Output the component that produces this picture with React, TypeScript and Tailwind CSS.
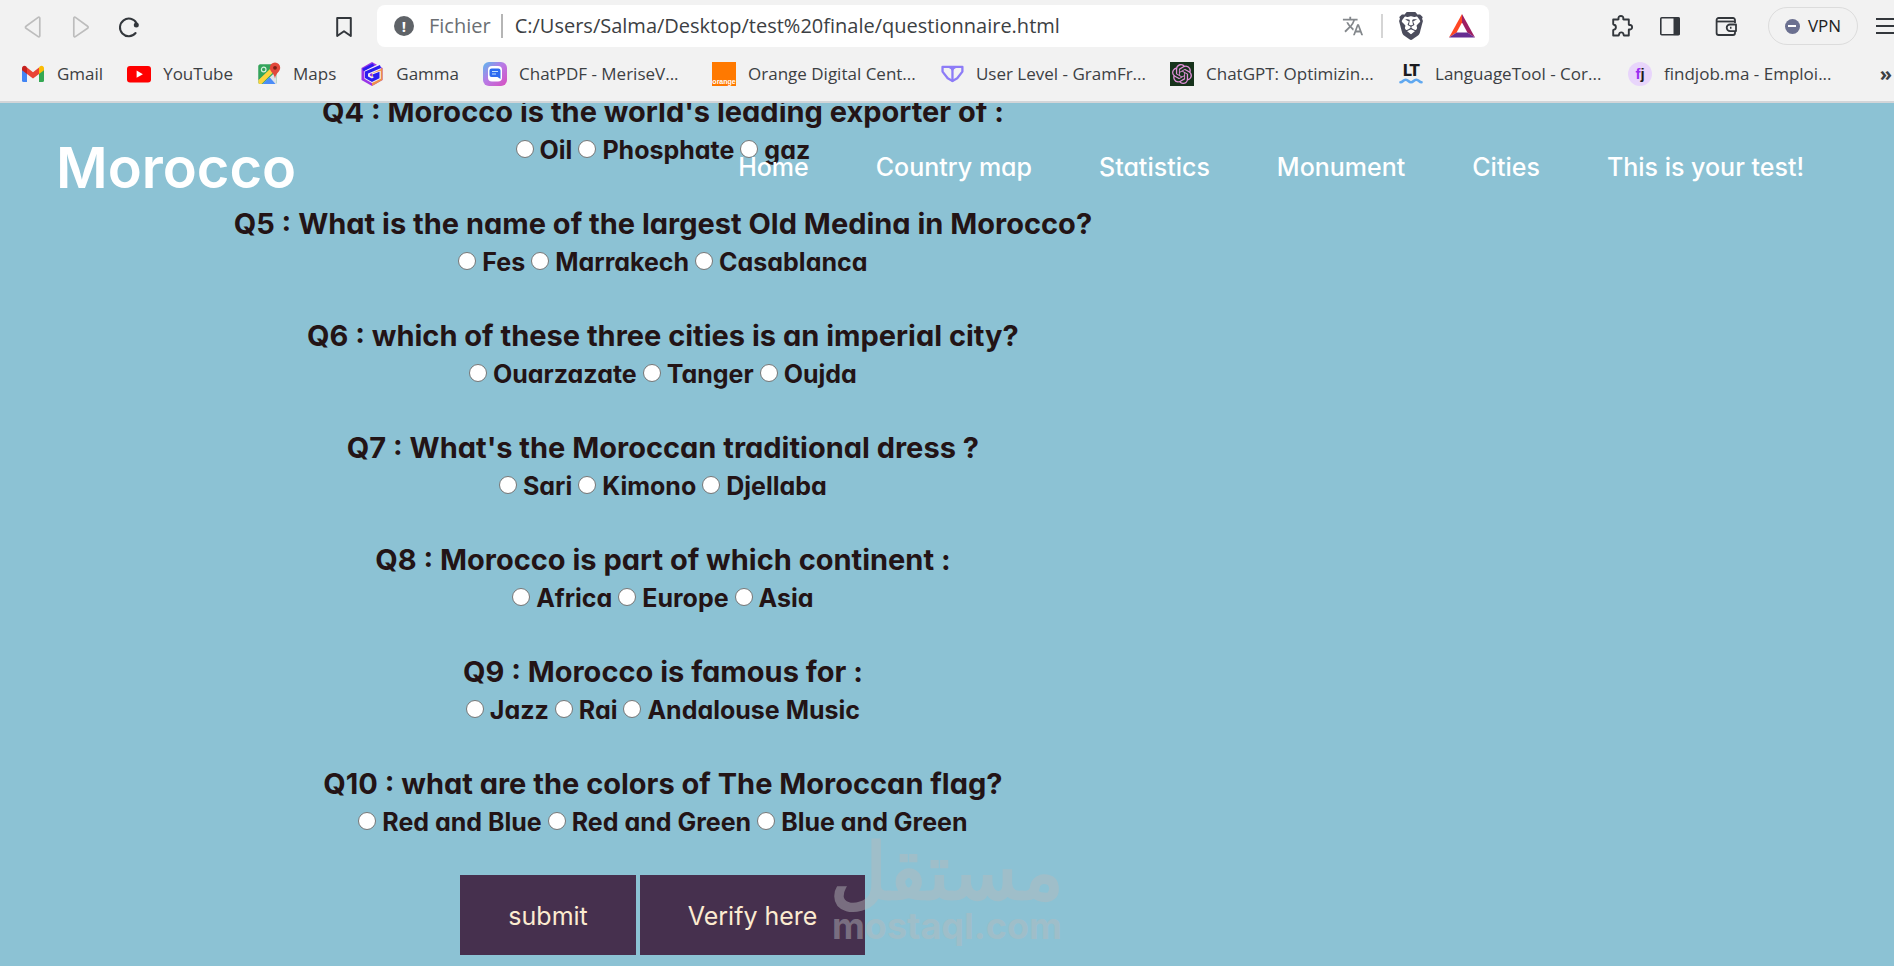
import type { ReactNode } from "react";
import { MdTranslate } from "react-icons/md";
import { SiBrave, SiOpenai } from "react-icons/si";

const iconButton = "flex size-6 shrink-0 items-center justify-center text-[#33373c]";

function BackIcon() {
  return (
    <svg viewBox="0 0 24 24" className="size-6" fill="none" stroke="#bdbdbd" strokeWidth="1.7" strokeLinejoin="round">
      <path d="M17.2 3.4 5 12.2a1.2 1.2 0 0 0 0 2L17.2 22.6a1 1 0 0 0 1.6-.8V4.2a1 1 0 0 0-1.6-.8Z" />
    </svg>
  );
}

function ForwardIcon() {
  return (
    <svg viewBox="0 0 24 24" className="size-6" fill="none" stroke="#bdbdbd" strokeWidth="1.7" strokeLinejoin="round">
      <path d="M6.4 3.4 18.6 12.2a1.2 1.2 0 0 1 0 2L6.4 22.6a1 1 0 0 1-1.6-.8V4.2a1 1 0 0 1 1.6-.8Z" />
    </svg>
  );
}

function ReloadIcon() {
  return (
    <svg viewBox="0 0 24 24" className="size-6" fill="none" stroke="currentColor" strokeWidth="2" strokeLinecap="round">
      <path d="M19.5 9.2A8.8 8.8 0 1 0 18.6 19" />
      <circle cx="19.3" cy="11" r="2.5" fill="currentColor" stroke="none" />
    </svg>
  );
}

function BookmarkIcon() {
  return (
    <svg viewBox="0 0 24 24" className="size-6" fill="none" stroke="currentColor" strokeWidth="2" strokeLinejoin="round">
      <path d="M5.2 4h13.6v18L12 17.2 5.2 22Z" />
    </svg>
  );
}

function BatIcon() {
  return (
    <svg viewBox="0 0 26 24" className="h-6 w-[26px]">
      <path d="M13 0v8.6L7.6 18.6 0 23.4Z" fill="#ff4724" />
      <path d="M13 0l13 23.4-7.6-4.8L13 8.6Z" fill="#9e1f63" />
      <path d="M0 23.4l7.6-4.8h10.8l7.6 4.8Z" fill="#662d91" />
    </svg>
  );
}

function PuzzleIcon() {
  return (
    <svg viewBox="0 0 24 24" className="size-6" fill="none" stroke="currentColor" strokeWidth="1.9" strokeLinejoin="round">
      <path d="M3.200 5.500h4.800c.5 0 .6-.4.5-.9C8.200 2.900 9.400 2 10.900 2s2.700.9 2.400 2.600c-.1.500 0 .9.500.9h5v5c0 .5.400.6.900.5 1.500-.3 2.400.8 2.400 2.200s-.9 2.500-2.400 2.200c-.5-.1-.9 0-.9.500v5.600h-4.500c-.4 0-.6-.3-.7-.8-.2-1.500-1-2.300-2.300-2.300s-2.100.8-2.300 2.300c-.1.500-.3.800-.7.800H3.200v-5.200c0-.5.300-.6.700-.7 1.300-.2 2-1.100 2-2.400s-.7-2.200-2-2.400c-.4-.1-.7-.3-.7-.8Z" />
    </svg>
  );
}

function SidebarIcon() {
  return (
    <svg viewBox="0 0 24 24" className="size-6" fill="none" stroke="currentColor" strokeWidth="1.6">
      <rect x="2.8" y="3.800" width="18.400" height="17" rx="1" />
      <path d="M15.500 3.500h6v17.600h-6Z" fill="currentColor" stroke="none" />
    </svg>
  );
}

function WalletIcon() {
  return (
    <svg viewBox="0 0 24 24" className="size-6" fill="none" stroke="currentColor" strokeWidth="1.8" strokeLinejoin="round">
      <path d="M21 9V6a2 2 0 0 0-2-2H4.600A2 2 0 0 0 2.600 6v13a2 2 0 0 0 2 2H19a2 2 0 0 0 2-2V17.500" />
      <path d="M3 7.500h18" />
      <path d="M22 10.500h-6a3.300 3.300 0 0 0 0 6.600h6Z" />
      <path d="M16 13.800h1.500" strokeWidth="2" />
    </svg>
  );
}

function GmailIcon() {
  return (
    <svg viewBox="0 0 24 24" className="size-6">
      <path d="M1 7v11.500A1.500 1.500 0 0 0 2.500 20H6V9Z" fill="#4285f4" />
      <path d="M18 9v11h3.500a1.500 1.500 0 0 0 1.500-1.500V7Z" fill="#34a853" />
      <path d="M18 5.600V12l5-3.800V6.300c0-2.300-2.400-3.200-4-2Z" fill="#fbbc04" />
      <path d="M6 12V5.600l6 4.600 6-4.600V12l-6 4.600Z" fill="#ea4335" />
      <path d="M1 6.300v1.900L6 12V5.600L5 4.300c-1.600-1.200-4-.3-4 2Z" fill="#c5221f" />
    </svg>
  );
}

function YouTubeIcon() {
  return (
    <svg viewBox="0 0 24 24" className="size-6">
      <rect y="4" width="24" height="16.500" rx="3" fill="#f00" />
      <path d="m9.600 8.600 6.300 3.600-6.300 3.600Z" fill="#fff" />
    </svg>
  );
}

function MapsIcon() {
  return (
    <svg viewBox="0 0 24 24" className="size-6">
      <rect x="1.500" y="2.500" width="18" height="19.500" rx="1.500" fill="#34a45b" />
      <path d="m19.500 9-14 13h14Z" fill="#dfe3e8" />
      <path d="M5.500 22 12.500 15l6 7Z" fill="#4b8df8" />
      <path d="M1.500 20.500v-3L14 5.500l4 3L4.500 22H3a1.500 1.500 0 0 1-1.500-1.500Z" fill="#fdd33c" />
      <path d="M1.500 4A1.500 1.500 0 0 1 3 2.500h12L14 6 1.500 18Z" fill="#34a45b" />
      <circle cx="6.700" cy="7.500" r="2.300" fill="none" stroke="#d5efdd" strokeWidth="1.200" />
      <path d="M18 .5a5.200 5.200 0 0 0-5.200 5.300c0 4 4.200 5 5.200 10.700 1-5.700 5.200-6.700 5.200-10.700A5.200 5.200 0 0 0 18 .5Z" fill="#e2483b" />
      <circle cx="18" cy="5.800" r="1.900" fill="#7c1f16" />
    </svg>
  );
}

function GammaIcon() {
  return (
    <svg viewBox="0 0 24 24" className="size-6">
      <path d="m12 0 10.500 6v12L12 24 1.500 18V6Z" fill="#9a35e8" />
      <path d="m12 9 10.500-3v12L12 24Z" fill="#f0904a" />
      <path d="M20 4.500 7.200 10.200v5L12 18l6-3v-2.500l-5 1.500" fill="none" stroke="#f3f3f3" strokeWidth="5.500" />
      <path d="M20.500 4.500 6.500 10.500v4.700l5.500 3 6-3V12l-5 2M3 8l10.500-5.500" fill="none" stroke="#2b1df0" strokeWidth="3" />
    </svg>
  );
}

function ChatPdfIcon() {
  return (
    <svg viewBox="0 0 24 24" className="size-6">
      <defs>
        <linearGradient id="pdf-tile" x1="0" y1="0" x2="1" y2="1">
          <stop offset="0" stopColor="#59b8ee" />
          <stop offset=".45" stopColor="#b77be6" />
          <stop offset="1" stopColor="#d84fc0" />
        </linearGradient>
      </defs>
      <rect width="24" height="24" rx="6" fill="url(#pdf-tile)" />
      <rect x="5" y="4" width="14" height="15.500" rx="4" fill="#fff" />
      <path d="M8.500 6.500h7a2 2 0 0 1 2 2v8.500l-3-2h-6a2 2 0 0 1-2-2V8.500a2 2 0 0 1 2-2Z" fill="#2e6bf0" />
      <path d="M9 9.500h6M9 12h4" stroke="#bfe0ff" strokeWidth="1.200" />
    </svg>
  );
}

function OrangeIcon() {
  return (
    <span className="flex size-6 items-end justify-center bg-[#ff7900] font-['Liberation_Sans'] text-[7px] leading-[9px] font-bold text-white">
      orange
    </span>
  );
}

function GramIcon() {
  return (
    <svg viewBox="0 0 24 24" className="size-6" fill="none" stroke="#8d7cf7" strokeWidth="2.400" strokeLinejoin="round" strokeLinecap="round">
      <path d="M1.600 4.500h20.800V9.500L17 16.500 12 19.300 7 16.500 1.600 9.500Z" />
      <path d="M9.500 5c1.800.6 2.500 1.700 2.500 3.500v10.500M14.500 5C12.700 5.600 12 6.700 12 8.500" />
    </svg>
  );
}

function LanguageToolIcon() {
  return (
    <span className="flex size-6 flex-col items-center justify-center">
      <span className="font-['DejaVu_Sans'] text-[15px] leading-[14px] font-bold text-[#1b1b20]">LT</span>
      <svg viewBox="0 0 24 6" className="h-[6px] w-6" fill="none" stroke="#5fa8f0" strokeWidth="2.600" strokeLinecap="round">
        <path d="M1.500 4.300c2.500 0 2.500-2.600 5.200-2.600s2.700 2.600 5.300 2.600 2.600-2.600 5.300-2.600 2.700 2.600 5.200 2.600" />
      </svg>
    </span>
  );
}

function FindJobIcon() {
  return (
    <span className="flex size-6 items-center justify-center rounded-full bg-[#e8d5fb] font-['Liberation_Sans'] text-[15px] leading-5 font-bold text-[#1b1b20]">
      <span className="text-[#9b2ff0]">f</span>j
    </span>
  );
}

const bookmarks: { label: string; icon: ReactNode }[] = [
  { label: "Gmail", icon: <GmailIcon /> },
  { label: "YouTube", icon: <YouTubeIcon /> },
  { label: "Maps", icon: <MapsIcon /> },
  { label: "Gamma", icon: <GammaIcon /> },
  { label: "ChatPDF - MeriseV...", icon: <ChatPdfIcon /> },
  { label: "Orange Digital Cent...", icon: <OrangeIcon /> },
  { label: "User Level - GramFr...", icon: <GramIcon /> },
  {
    label: "ChatGPT: Optimizin...",
    icon: (
      <span className="flex size-6 items-center justify-center bg-[#17331c]">
        <SiOpenai className="size-5 text-[#e08fd8]" />
      </span>
    ),
  },
  { label: "LanguageTool - Cor...", icon: <LanguageToolIcon /> },
  { label: "findjob.ma - Emploi...", icon: <FindJobIcon /> },
];

const navLinks = ["Home", "Country map", "Statistics", "Monument", "Cities", "This is your test!"];

const questions = [
  { id: "q4", title: "Q4 : Morocco is the world's leading exporter of :", options: ["Oil", "Phosphate", "gaz"] },
  { id: "q5", title: "Q5 : What is the name of the largest Old Medina in Morocco?", options: ["Fes", "Marrakech", "Casablanca"] },
  { id: "q6", title: "Q6 : which of these three cities is an imperial city?", options: ["Ouarzazate", "Tanger", "Oujda"] },
  { id: "q7", title: "Q7 : What's the Moroccan traditional dress ?", options: ["Sari", "Kimono", "Djellaba"] },
  { id: "q8", title: "Q8 : Morocco is part of which continent :", options: ["Africa", "Europe", "Asia"] },
  { id: "q9", title: "Q9 : Morocco is famous for :", options: ["Jazz", "Rai", "Andalouse Music"] },
  { id: "q10", title: "Q10 : what are the colors of The Moroccan flag?", options: ["Red and Blue", "Red and Green", "Blue and Green"] },
];

function BrowserBar() {
  return (
    <div className="shrink-0 overflow-hidden border-b-2 border-[#d3d5d8] bg-[#f2f2f2] font-['Open_Sans',sans-serif] text-[#3c4043]">
      <div className="flex h-[52px] items-center pl-[21px]">
        <div className="flex gap-6">
          <button type="button" aria-label="Back" className={iconButton}><BackIcon /></button>
          <button type="button" aria-label="Forward" className={iconButton}><ForwardIcon /></button>
          <button type="button" aria-label="Reload" className={iconButton}><ReloadIcon /></button>
        </div>
        <button type="button" aria-label="Bookmark this page" className={`${iconButton} ml-[191px]`}><BookmarkIcon /></button>
        <div className="ml-[21px] flex h-[42px] min-w-0 flex-1 items-center rounded-lg bg-white pr-[14px] pl-[17px]">
          <span className="flex size-5 shrink-0 items-center justify-center rounded-full bg-[#5f6368] text-[15px] leading-5 font-bold text-white">!</span>
          <span className="ml-[15px] text-[20px] text-[#6b6f73]">Fichier</span>
          <span className="ml-[10px] h-6 w-[2px] shrink-0 bg-[#b5b5b5]" />
          <input
            aria-label="Address"
            defaultValue="C:/Users/Salma/Desktop/test%20finale/questionnaire.html"
            className="ml-3 min-w-0 flex-1 bg-transparent text-[20px] outline-none"
          />
          <button type="button" aria-label="Translate" className="flex size-6 shrink-0 items-center justify-center text-[#83878b]"><MdTranslate className="size-[22px]" /></button>
          <span className="ml-4 h-6 w-[2px] shrink-0 bg-[#d5d5d5]" />
          <button type="button" aria-label="Shields" className="ml-[14px] flex w-7 shrink-0 justify-center text-[#4b4c5c]"><SiBrave className="size-7" /></button>
          <button type="button" aria-label="Rewards" className="ml-6 shrink-0"><BatIcon /></button>
        </div>
        <div className="ml-[121px] flex items-center">
          <button type="button" aria-label="Extensions" className={iconButton}><PuzzleIcon /></button>
          <button type="button" aria-label="Sidebar" className={`${iconButton} ml-6`}><SidebarIcon /></button>
          <button type="button" aria-label="Wallet" className={`${iconButton} ml-8`}><WalletIcon /></button>
          <button type="button" className="ml-[30px] flex h-[38px] w-[90px] items-center justify-center gap-2 rounded-full border border-[#dcdcdc] text-[17px] text-[#222]">
            <span className="flex size-[15px] items-center justify-center rounded-full bg-[#6b7090]">
              <span className="h-[2px] w-2 bg-white" />
            </span>
            VPN
          </button>
          <button type="button" aria-label="Menu" className="ml-[18px] flex w-[18px] flex-col gap-[5px]">
            <span className="h-[2px] w-full bg-[#33373c]" />
            <span className="h-[2px] w-full bg-[#33373c]" />
            <span className="h-[2px] w-full bg-[#33373c]" />
          </button>
        </div>
      </div>
      <div className="flex h-[49px] items-center justify-between pr-[2px] pb-[5px] pl-[21px]">
        <ul className="flex items-center gap-6">
          {bookmarks.map((b) => (
            <li key={b.label}>
              <a href="#" className={b.label.endsWith("...") ? "flex w-[205px] items-center gap-3 text-[17px] whitespace-nowrap" : "flex items-center gap-3 text-[17px] whitespace-nowrap"}>
                {b.icon}
                {b.label}
              </a>
            </li>
          ))}
        </ul>
        <button type="button" aria-label="More bookmarks" className="text-[20px] leading-6 font-bold">»</button>
      </div>
    </div>
  );
}

export default function App() {
  return (
    <div className="flex min-h-screen flex-col overflow-x-hidden bg-[#8cc2d4]">
      <BrowserBar />
      <main className="relative flex-1 overflow-hidden font-['Inter',sans-serif] [font-feature-settings:'cv11']">
        <form className="-mt-[13px] w-[70%] pb-[11px] font-bold text-[#231416]" onSubmit={(e) => e.preventDefault()}>
          {questions.map((q) => (
            <fieldset key={q.id} className="mb-[33px]">
              <legend className="w-full text-center text-[29px] leading-[43px]">{q.title}</legend>
              <div className="flex h-9 items-center justify-center gap-[6px] text-[25px]">
                {q.options.map((o) => (
                  <label key={o} className="flex items-center gap-[6px]">
                    <input type="radio" name={q.id} value={o} className="mb-1 size-[18px] appearance-none rounded-full border border-[#767676] bg-white checked:border-4" />
                    {o}
                  </label>
                ))}
              </div>
            </fieldset>
          ))}
          <div className="flex justify-center gap-1 pt-px text-[25px] font-normal text-[#fcebd0]">
            <button type="submit" className="h-20 bg-[#46304e] px-12 pt-1">submit</button>
            <button type="button" className="h-20 bg-[#46304e] px-12 pt-1">Verify here</button>
          </div>
        </form>

        <header className="absolute inset-x-0 top-0 flex h-[130px] items-center justify-between pr-[90px] pl-[56px] text-white">
          <a href="#" className="text-[56px] leading-none font-semibold">Morocco</a>
          <nav className="flex gap-[67px] text-[25px] font-medium">
            {navLinks.map((l) => (
              <a key={l} href="#">{l}</a>
            ))}
          </nav>
        </header>

        <div className="pointer-events-none absolute inset-x-0 bottom-5 flex flex-col items-center font-bold text-[#b8bbbd] opacity-45 [font-feature-settings:normal]">
          <span lang="ar" dir="rtl" className="text-[78px] leading-[68px] [font-family:sans-serif]">مستقل</span>
          <span className="text-[36px] leading-10">mostaql.com</span>
        </div>
      </main>
    </div>
  );
}
